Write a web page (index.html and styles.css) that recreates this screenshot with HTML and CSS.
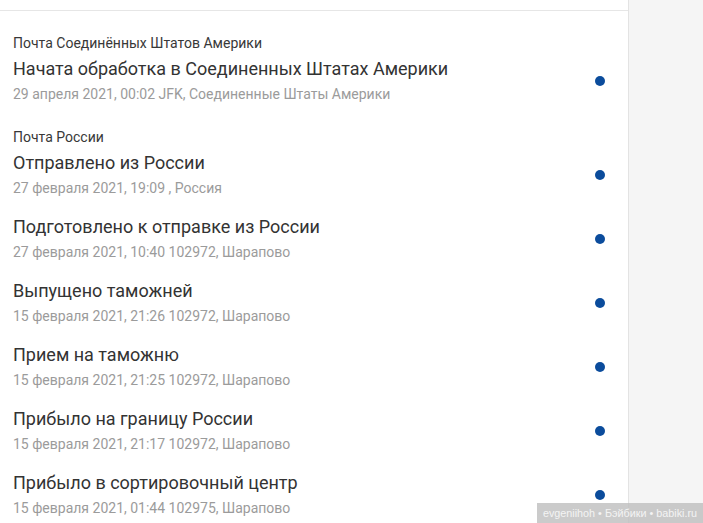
FILE: index.html
```html
<!DOCTYPE html>
<html lang="ru">
<head>
<meta charset="utf-8">
<title>Отслеживание</title>
<link rel="stylesheet" href="styles.css">
</head>
<body>
<div class="page">
  <main class="panel">
    <div class="panel-head"></div>
    <div class="groups">
      <section class="group">
        <div class="provider">Почта Соединённых Штатов Америки</div>
        <div class="item">
          <div class="text">
            <div class="title">Начата обработка в Соединенных Штатах Америки</div>
            <div class="detail">29 апреля 2021, 00:02 JFK, Соединенные Штаты Америки</div>
          </div>
          <span class="dot"></span>
        </div>
      </section>
      <section class="group">
        <div class="provider">Почта России</div>
        <div class="item">
          <div class="text">
            <div class="title">Отправлено из России</div>
            <div class="detail">27 февраля 2021, 19:09 , Россия</div>
          </div>
          <span class="dot"></span>
        </div>
        <div class="item">
          <div class="text">
            <div class="title">Подготовлено к отправке из России</div>
            <div class="detail">27 февраля 2021, 10:40 102972, Шарапово</div>
          </div>
          <span class="dot"></span>
        </div>
        <div class="item">
          <div class="text">
            <div class="title">Выпущено таможней</div>
            <div class="detail">15 февраля 2021, 21:26 102972, Шарапово</div>
          </div>
          <span class="dot"></span>
        </div>
        <div class="item">
          <div class="text">
            <div class="title">Прием на таможню</div>
            <div class="detail">15 февраля 2021, 21:25 102972, Шарапово</div>
          </div>
          <span class="dot"></span>
        </div>
        <div class="item">
          <div class="text">
            <div class="title">Прибыло на границу России</div>
            <div class="detail">15 февраля 2021, 21:17 102972, Шарапово</div>
          </div>
          <span class="dot"></span>
        </div>
        <div class="item">
          <div class="text">
            <div class="title">Прибыло в сортировочный центр</div>
            <div class="detail">15 февраля 2021, 01:44 102975, Шарапово</div>
          </div>
          <span class="dot"></span>
        </div>
      </section>
    </div>
  </main>
  <aside class="side"></aside>
</div>
<div class="watermark">evgeniihoh • Бэйбики • babiki.ru</div>
</body>
</html>
```

FILE: styles.css
```css
html, body {
  margin: 0;
  padding: 0;
  height: 100%;
  overflow: hidden;
}
body {
  font-family: Roboto, "Noto Sans", Arial, sans-serif;
  background: #f5f5f5;
}
.page {
  display: flex;
  height: 523px;
}
.panel {
  width: 628px;
  background: #ffffff;
  border-right: 1px solid #e3e3e3;
  flex: none;
}
.side {
  flex: 1;
  background: #f5f5f5;
}
.panel-head {
  height: 10px;
  border-bottom: 1px solid #e6e6e6;
}
.groups {
  display: flex;
  flex-direction: column;
  gap: 18px;
  padding: 19px 23px 0 13px;
}
.group {
  display: flex;
  flex-direction: column;
  gap: 14px;
}
.provider {
  font-size: 14px;
  line-height: 26px;
  color: #383838;
  margin-bottom: -14px;
}
.item {
  display: flex;
  align-items: center;
  justify-content: space-between;
}
.title {
  font-size: 18px;
  line-height: 26px;
  color: #333333;
}
.detail {
  font-size: 14px;
  line-height: 24px;
  color: #9b9b9b;
}
.dot {
  width: 10px;
  height: 10px;
  border-radius: 50%;
  background: #0b4c9c;
  flex: none;
}
.watermark {
  position: absolute;
  right: 0;
  bottom: 0;
  width: 166px;
  height: 20px;
  line-height: 20px;
  background: rgba(190, 190, 190, 0.8);
  color: #f4f4f4;
  font-family: "Liberation Sans", Arial, sans-serif;
  font-size: 10.8px;
  text-align: center;
  white-space: nowrap;
}
```
